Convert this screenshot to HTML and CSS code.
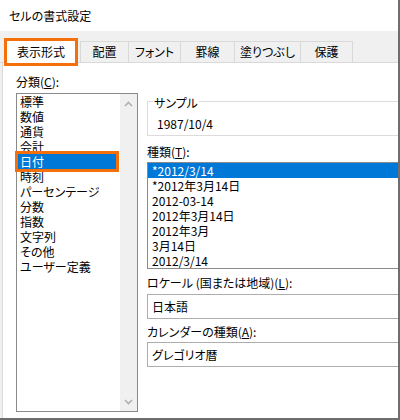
FILE: index.html
```html
<!DOCTYPE html>
<html lang="ja">
<head>
<meta charset="utf-8">
<link rel="stylesheet" href="styles.css">
</head>
<body>
<div class="window">
  <div class="title">セルの書式設定</div>
  <div class="tabs">
    <div class="tab active">表示形式</div>
    <div class="tab t1">配置</div>
    <div class="tab t2">フォント</div>
    <div class="tab t3">罫線</div>
    <div class="tab t4">塗りつぶし</div>
    <div class="tab t5">保護</div>
  </div>
  <div class="panel">
    <div class="left">
      <div class="label">分類(<u>C</u>):</div>
      <div class="catlist">
        <div class="items">
          <div class="item">標準</div>
          <div class="item">数値</div>
          <div class="item">通貨</div>
          <div class="item">会計</div>
          <div class="item selected marked">日付</div>
          <div class="item">時刻</div>
          <div class="item">パーセンテージ</div>
          <div class="item">分数</div>
          <div class="item">指数</div>
          <div class="item">文字列</div>
          <div class="item">その他</div>
          <div class="item">ユーザー定義</div>
        </div>
        <div class="scroll">
          <svg class="chev" width="9" height="6" viewBox="0 0 9 6"><path d="M1 5 L4.5 1.5 L8 5" fill="none" stroke="#b0b0b0" stroke-width="1.6"/></svg>
          <svg class="chev" width="9" height="6" viewBox="0 0 9 6"><path d="M1 1 L4.5 4.5 L8 1" fill="none" stroke="#b0b0b0" stroke-width="1.6"/></svg>
        </div>
      </div>
    </div>
    <div class="right">
      <div class="sample">
        <span class="legend">サンプル</span>
        <div class="sample-value">1987/10/4</div>
      </div>
      <div class="label gap8">種類(<u>T</u>):</div>
      <div class="typelist">
        <div class="titem selected">*2012/3/14</div>
        <div class="titem">*2012年3月14日</div>
        <div class="titem">2012-03-14</div>
        <div class="titem">2012年3月14日</div>
        <div class="titem">2012年3月</div>
        <div class="titem">3月14日</div>
        <div class="titem">2012/3/14</div>
      </div>
      <div class="label gap6">ロケール (国または地域)(<u>L</u>):</div>
      <div class="combo">日本語</div>
      <div class="label gap5">カレンダーの種類(<u>A</u>):</div>
      <div class="combo">グレゴリオ暦</div>
    </div>
  </div>
</div>
</body>
</html>
```

FILE: styles.css
```css
html, body {
  margin: 0;
  padding: 0;
}
body {
  width: 400px;
  height: 420px;
  overflow: hidden;
  font-family: "Noto Sans CJK JP", "Noto Sans", sans-serif;
  font-size: 12px;
  font-feature-settings: "palt" 1;
  color: #000;
}
.window {
  width: 400px;
  height: 420px;
  box-sizing: border-box;
  border-right: 2px solid #6e6e6e;
  border-bottom: 2px solid #6e6e6e;
  background: #f0f0f0;
  display: flex;
  flex-direction: column;
  overflow: hidden;
}
.title {
  height: 31px;
  line-height: 31px;
  padding-left: 9px;
  background: #fff;
  flex: none;
}
.tabs {
  height: 31px;
  flex: none;
  display: flex;
  align-items: flex-end;
  border-bottom: 1px solid #d9d9d9;
  background: #f0f0f0;
}
.tab {
  box-sizing: border-box;
  height: 21px;
  line-height: 20px;
  border: 1px solid #d9d9d9;
  border-bottom: none;
  text-align: center;
  margin-left: -1px;
  white-space: nowrap;
}
.tab.active {
  position: relative;
  z-index: 2;
  margin-left: 4px;
  margin-right: 2px;
  width: 74px;
  height: 28px;
  line-height: 22px;
  border: 3px solid #f5700a;
  background: #fff;
  margin-bottom: -4px;
}
.tab.t1 { margin-left: 0; width: 49px; }
.tab.t2 { width: 53px; }
.tab.t3 { width: 55px; }
.tab.t4 { width: 67px; }
.tab.t5 { width: 53px; }
.panel {
  flex: 1;
  margin-left: 2px;
  border-left: 1px solid #dadada;
  background: #fff;
  display: flex;
  gap: 9px;
  padding: 11px 0 0 13px;
}
.left {
  flex: none;
}
.label {
  line-height: 15px;
  white-space: nowrap;
}
.catlist {
  margin-top: 4px;
  width: 122px;
  height: 319px;
  box-sizing: border-box;
  border: 1px solid #8a8a8a;
  display: flex;
}
.items {
  width: 103px;
}
.item {
  line-height: 15px;
  padding-left: 3px;
  white-space: nowrap;
}
.item.selected {
  background: #0078d7;
  color: #fff;
  margin-left: 1px;
  padding-left: 2px;
  width: 96px;
}
.item.marked {
  outline: 3px solid #f5700a;
}
.scroll {
  width: 17px;
  background: #f0f0f0;
  display: flex;
  flex-direction: column;
  justify-content: space-between;
  align-items: center;
  padding: 7px 0 6px;
  box-sizing: border-box;
}
.chev {
  display: block;
}
.right {
  flex: none;
  width: 290px;
}
.sample {
  position: relative;
  margin-top: 27px;
  height: 35px;
  box-sizing: border-box;
  border: 1px solid #dcdcdc;
}
.legend {
  position: absolute;
  top: -7px;
  left: 5px;
  padding: 0 1px;
  background: #fff;
  line-height: 15px;
}
.sample-value {
  padding: 14px 0 0 9px;
  line-height: 15px;
}
.gap8 { margin-top: 8px; }
.gap6 { margin-top: 6px; }
.gap5 { margin-top: 5px; }
.typelist {
  margin-top: 3px;
  border: 1px solid #8a8a8a;
}
.titem {
  line-height: 15px;
  padding-left: 4px;
  white-space: nowrap;
}
.titem.selected {
  background: #0078d7;
  color: #fff;
}
.combo {
  margin-top: 4px;
  height: 25px;
  box-sizing: border-box;
  border: 1px solid #adadad;
  line-height: 23px;
  padding-left: 4px;
}
.label.gap5 + .combo {
  margin-top: 3px;
}
```
